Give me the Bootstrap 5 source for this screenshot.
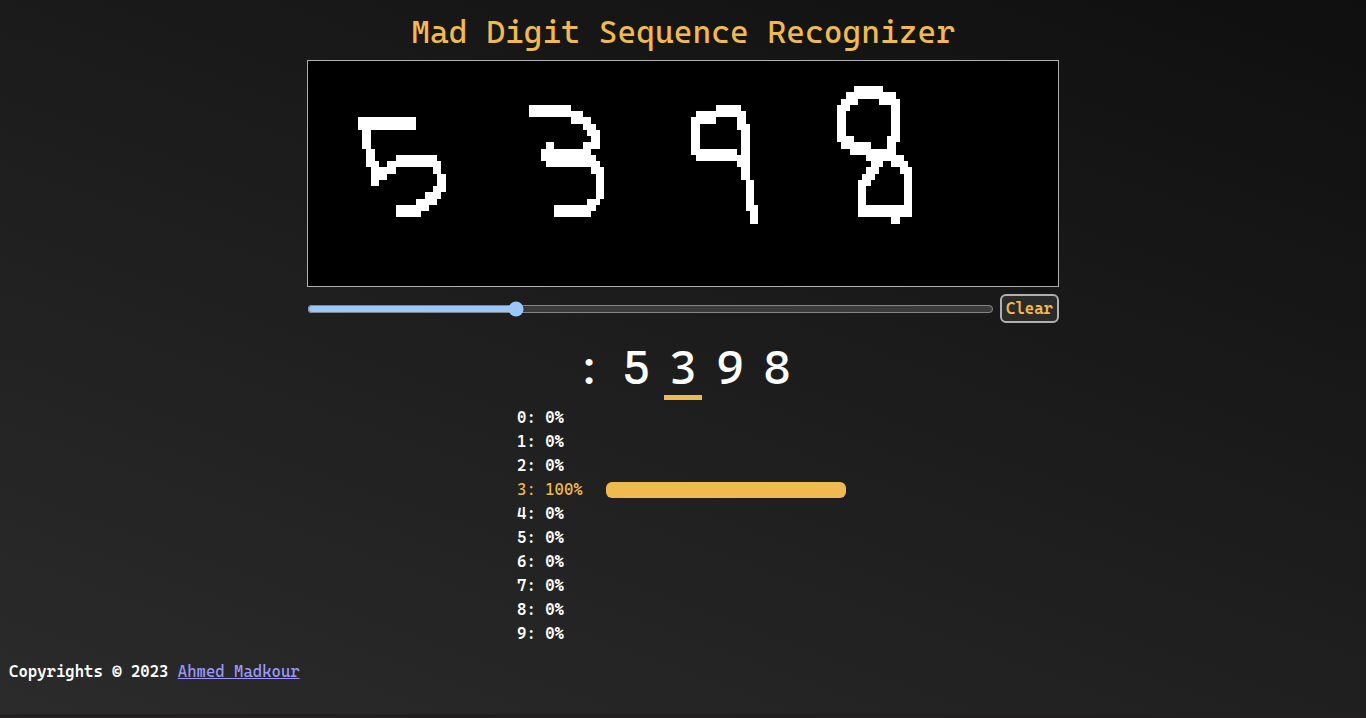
<!DOCTYPE html>
<html lang="en">
<head>
<meta charset="utf-8">
<meta name="viewport" content="width=device-width, initial-scale=1">
<title>Mad Digit Sequence Recognizer</title>
<link href="https://cdn.jsdelivr.net/npm/bootstrap@5.3.0/dist/css/bootstrap.min.css" rel="stylesheet">
<style>
  :root { color-scheme: dark; --gold: #f0ba50; }
  body {
    background: linear-gradient(20deg, #2b2b2b, #0f0f0f) #231f20;
    color: #fff;
    font-family: "Cascadia Code", "DejaVu Sans Mono", monospace;
    font-size: 16px;
    font-weight: 600;
    line-height: 24px;
    border-bottom: 4px solid #231f20;
    background-clip: padding-box;
  }
  .gold { color: var(--gold); }
  .page-title { font-size: 32px; font-weight: 500; line-height: 40px; padding-top: 12px; margin-bottom: 8px; }
  .board { max-width: 752px; }
  .pad { background: #000; border: 1px solid #b0b0b0; }
  .controls { gap: 6px; margin-top: 7px; }
  .pen-size { accent-color: #99c8ff; height: 16px; min-width: 0; }
  .clear-btn {
    background: #2b2b2b; border: 2px solid #b0b0b0; border-radius: 6px;
    width: 59px; height: 29px; padding: 0; line-height: 24px; font-weight: 600;
  }
  .sequence { gap: 9px; margin-top: 18px; font-size: 48px; line-height: 52px; }
  .glyph { width: 38px; border: 0 solid transparent; border-bottom-width: 5px; background: none; color: #fff; padding: 0 0 2px; font-weight: 500; }
  .glyph.chosen { border-bottom-color: var(--gold); }
  .scores { max-width: 332px; margin-top: 6px; }
  .score-top { font-weight: 500; }
  .score-label { width: 89px; }
  .score-bar { height: 16px; max-width: 240px; border-radius: 6px; background: var(--gold); }
  .site-foot { padding: 14px 9px; }
  .site-foot a { color: #9999ff; font-weight: 500; }
</style>
</head>
<body class="min-vh-100 d-flex flex-column">
<main class="container-fluid">
  <h1 class="page-title gold text-center">Mad Digit Sequence Recognizer</h1>
  <div class="board mx-auto">
    <svg class="pad d-block w-100" viewBox="0 0 750 225" role="img" aria-label="Handwritten digits" shape-rendering="crispEdges" fill="#fff">
      <path transform="translate(32 14) scale(.33333)" d="M54 126H228V165H54zM66 165H93V222H66zM78 222H105V276H78zM93 258H117V333H93zM117 276H141V315H117zM141 258H168V297H141zM168 240H291V276H168zM279 258H303V297H279zM291 297H318V351H291zM279 333H303V372H279zM255 351H291V390H255zM228 372H255V390H228zM228 390H267V408H228zM168 390H243V426H168z"/>
      <path transform="translate(202 14) scale(.33333)" d="M57 90H183V126H57zM183 108H219V147H183zM219 126H243V165H219zM231 147H258V183H231zM243 165H270V222H243zM219 201H243V222H219zM108 201H132V222H108zM93 222H243V258H93zM108 240H258V276H108zM243 258H270V297H243zM258 276H282V372H258zM231 372H270V390H231zM231 390H258V408H231zM132 390H243V426H132z"/>
      <path transform="translate(362 14) scale(.33333)" d="M138 90H213V126H138zM78 108H138V147H78zM63 126H90V240H63zM201 108H228V165H201zM213 147H240V315H213zM78 222H201V258H78zM201 240H228V276H201zM228 315H252V408H228zM240 390H264V447H240z"/>
      <path transform="translate(502 14) scale(.33333)" d="M132 33H219V72H132zM108 51H144V90H108zM93 72H120V108H93zM81 90H108V201H81zM207 51H258V90H207zM243 72H270V201H243zM93 183H132V222H93zM231 183H258V240H231zM120 201H183V240H120zM168 222H258V258H168zM243 240H282V276H243zM183 258H219V276H183zM270 258H294V297H270zM282 276H306V426H282zM168 276H207V297H168zM156 297H195V315H156zM144 315H183V333H144zM144 333H168V426H144zM144 390H306V426H144zM243 426H270V447H243z"/>
    </svg>
    <div class="controls d-flex align-items-center">
      <input class="pen-size flex-grow-1 m-0" type="range" min="0" max="100" value="30" aria-label="Scroll position">
      <button class="clear-btn gold" type="button">Clear</button>
    </div>
  </div>
  <div class="sequence d-flex justify-content-center">
    <span class="glyph text-center">:</span>
    <button class="glyph" type="button">5</button>
    <button class="glyph chosen" type="button">3</button>
    <button class="glyph" type="button">9</button>
    <button class="glyph" type="button">8</button>
  </div>
  <ul class="scores list-unstyled mx-auto mb-0">
    <li>0: 0%</li>
    <li>1: 0%</li>
    <li>2: 0%</li>
    <li class="score-top gold d-flex align-items-center"><span class="score-label">3: 100%</span><span class="score-bar flex-grow-1"></span></li>
    <li>4: 0%</li>
    <li>5: 0%</li>
    <li>6: 0%</li>
    <li>7: 0%</li>
    <li>8: 0%</li>
    <li>9: 0%</li>
  </ul>
</main>
<footer class="site-foot">Copyrights © 2023 <a href="#">Ahmed Madkour</a></footer>
<script src="https://cdn.jsdelivr.net/npm/bootstrap@5.3.0/dist/js/bootstrap.bundle.min.js"></script>
</body>
</html>
